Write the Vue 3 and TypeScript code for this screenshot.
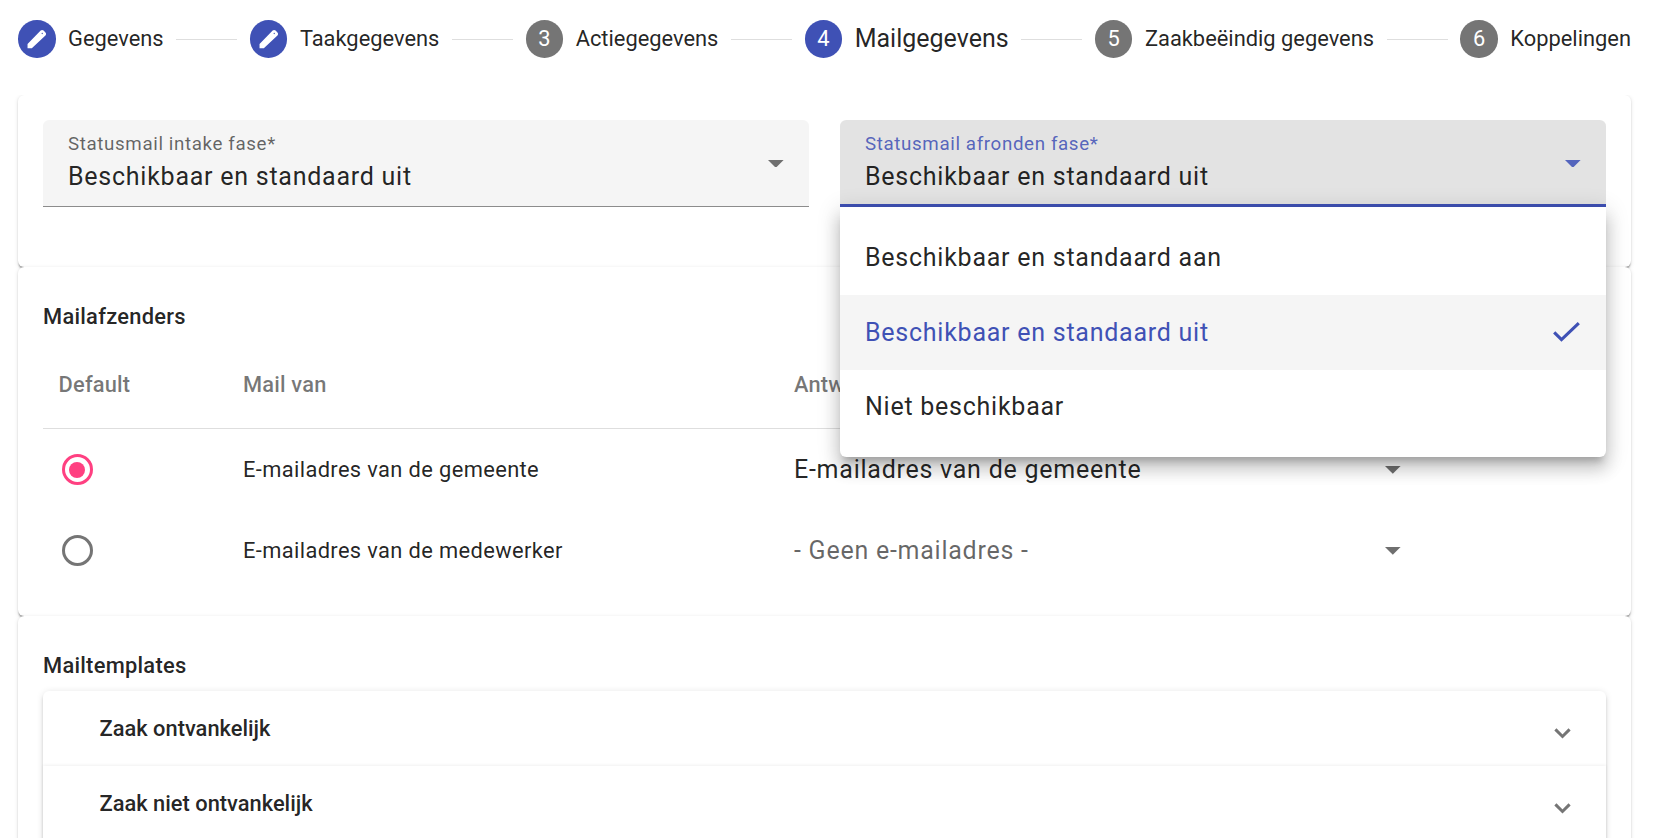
<script setup lang="ts">
import { ref } from 'vue'

interface Step {
  label: string
  state: 'edit' | 'number' | 'active'
}

interface Sender {
  from: string
  replyTo: string | null
}

const steps: Step[] = [
  { label: 'Gegevens', state: 'edit' },
  { label: 'Taakgegevens', state: 'edit' },
  { label: 'Actiegegevens', state: 'number' },
  { label: 'Mailgegevens', state: 'active' },
  { label: 'Zaakbeëindig gegevens', state: 'number' },
  { label: 'Koppelingen', state: 'number' },
]

const options = ['Beschikbaar en standaard aan', 'Beschikbaar en standaard uit', 'Niet beschikbaar']
const intake = ref(options[1])
const finish = ref(options[1])

const senders: Sender[] = [
  { from: 'E-mailadres van de gemeente', replyTo: 'E-mailadres van de gemeente' },
  { from: 'E-mailadres van de medewerker', replyTo: null },
]
const defaultSender = ref(0)

const templates = ['Zaak ontvankelijk', 'Zaak niet ontvankelijk']
</script>

<template>
  <main class="page">
    <header class="stepper">
      <template v-for="(step, i) in steps" :key="step.label">
        <span v-if="i > 0" class="step-line"></span>
        <div class="step" :class="step.state">
          <span class="step-icon">
            <svg v-if="step.state === 'edit'" viewBox="0 0 24 24">
              <path fill-rule="evenodd" d="M3.4 16.4v4.1h4.1L20.6 8.1c.8-.8.8-2 0-2.8l-1.8-1.9c-.8-.8-2-.8-2.8 0zM17.5 5.6a.6.6 0 1 0 .01 0z" />
            </svg>
            <span v-else class="step-number">{{ i + 1 }}</span>
          </span>
          <span class="step-label">{{ step.label }}</span>
        </div>
      </template>
    </header>

    <section class="card fields">
      <div class="field">
        <div class="field-text">
          <span class="field-label">Statusmail intake fase*</span>
          <span class="field-value">{{ intake }}</span>
        </div>
        <svg class="arrow" viewBox="0 0 10 5"><path d="M0 0h10L5 5z" /></svg>
      </div>
      <div class="field open">
        <div class="field-text">
          <span class="field-label">Statusmail afronden fase*</span>
          <span class="field-value">{{ finish }}</span>
        </div>
        <svg class="arrow" viewBox="0 0 10 5"><path d="M0 0h10L5 5z" /></svg>
        <ul class="panel">
          <li v-for="o in options" :key="o" class="option" :class="{ selected: o === finish }" @click="finish = o">
            <span>{{ o }}</span>
            <svg v-if="o === finish" class="check" viewBox="0 0 27 20">
              <path d="M1.2 10.4l7.3 7.3L25.8 1.2" />
            </svg>
          </li>
        </ul>
      </div>
    </section>

    <section class="card senders">
      <h2>Mailafzenders</h2>
      <div class="row head">
        <span>Default</span>
        <span>Mail van</span>
        <span>Antwoord aan</span>
      </div>
      <div v-for="(s, i) in senders" :key="s.from" class="row">
        <span class="radio-cell">
          <span class="radio" :class="{ on: defaultSender === i }" @click="defaultSender = i"></span>
        </span>
        <span>{{ s.from }}</span>
        <span class="inline-select" :class="{ empty: !s.replyTo }">
          <span>{{ s.replyTo ?? '- Geen e-mailadres -' }}</span>
          <svg class="arrow" viewBox="0 0 10 5"><path d="M0 0h10L5 5z" /></svg>
        </span>
      </div>
    </section>

    <section class="card templates">
      <h2>Mailtemplates</h2>
      <div class="accordion">
        <div v-for="t in templates" :key="t" class="accordion-row">
          <span>{{ t }}</span>
          <svg class="chevron" viewBox="0 0 17 11"><path d="M1.4 1.4l7.1 7.1 7.1-7.1" /></svg>
        </div>
      </div>
    </section>
  </main>
</template>

<style>
body {
  margin: 0;
  background: #fff;
}
</style>

<style scoped>
.page {
  box-sizing: border-box;
  height: 838px;
  overflow: hidden;
  padding: 0 22px 0 18px;
  font-family: Roboto, sans-serif;
  font-size: 21.875px;
  color: rgba(0, 0, 0, 0.87);
}
.stepper {
  position: relative;
  z-index: 1;
  box-sizing: border-box;
  display: flex;
  align-items: center;
  height: 95px;
  padding-bottom: 17px;
  background: #fff;
}
.step {
  display: flex;
  align-items: center;
  gap: 12.5px;
  white-space: nowrap;
}
.step-icon {
  display: flex;
  align-items: center;
  justify-content: center;
  width: 37.5px;
  height: 37.5px;
  border-radius: 50%;
  background: #757575;
  color: #fff;
}
.edit .step-icon,
.active .step-icon {
  background: #3f51b5;
}
.step-icon svg {
  width: 25px;
  height: 25px;
  fill: #fff;
}
.step-label,
.step-number {
  padding-bottom: 1.5px;
}
.active .step-label {
  font-size: 25px;
}
.step-line {
  flex: 1;
  height: 1px;
  margin: 0 12.5px;
  background: #dedede;
}
.card {
  box-sizing: border-box;
  padding: 25px;
  border-radius: 6.25px;
  background: #fff;
  box-shadow:
    0 3px 1.5px -1.5px rgba(0, 0, 0, 0.2),
    0 1.5px 1.5px 0 rgba(0, 0, 0, 0.14),
    0 1.5px 4.7px 0 rgba(0, 0, 0, 0.12);
}
.fields {
  display: grid;
  grid-template-columns: 1fr 1fr;
  gap: 31px;
  height: 172px;
}
.field {
  position: relative;
  box-sizing: border-box;
  display: flex;
  align-items: center;
  justify-content: space-between;
  height: 87px;
  padding: 0 25px;
  border-radius: 6.25px 6.25px 0 0;
  border-bottom: 1px solid #8c8c8c;
  background: #f5f5f5;
}
.field-text {
  display: flex;
  flex-direction: column;
  align-self: flex-start;
  padding-top: 14px;
}
.field-label {
  height: 24px;
  line-height: 20px;
  font-size: 18.75px;
  letter-spacing: 0.62px;
  color: rgba(0, 0, 0, 0.6);
}
.field-value {
  line-height: 37.5px;
  font-size: 25px;
  letter-spacing: 0.75px;
}
.arrow {
  width: 15.6px;
  height: 7.8px;
  flex: none;
  margin-top: 1px;
  fill: #6f6f6f;
}
.field.open {
  border-bottom: 3px solid #3f51b5;
  background: #e3e3e3;
}
.open .field-label {
  color: rgba(63, 81, 181, 0.87);
}
.open .arrow {
  margin-top: 3px;
  fill: #5465bd;
}
.panel {
  position: absolute;
  z-index: 2;
  top: 87px;
  left: 0;
  right: 0;
  margin: 0;
  padding: 12.5px 0;
  list-style: none;
  border-radius: 0 0 6.25px 6.25px;
  background: #fff;
  box-shadow:
    0 7.8px 7.8px -4.7px rgba(0, 0, 0, 0.2),
    0 12.5px 15.6px 1.5px rgba(0, 0, 0, 0.14),
    0 4.7px 21.9px 3px rgba(0, 0, 0, 0.12);
}
.option {
  box-sizing: border-box;
  display: flex;
  align-items: center;
  justify-content: space-between;
  height: 75px;
  padding: 0 25px;
  font-size: 25px;
  letter-spacing: 0.75px;
}
.option:last-child {
  padding-bottom: 1px;
}
.option.selected {
  background: #f5f5f5;
  color: #3f51b5;
}
.check {
  width: 27px;
  height: 20px;
  margin: 0 1px 0 0;
  fill: none;
  stroke: #3f51b5;
  stroke-width: 3.1;
}
.senders {
  height: 349px;
}
h2 {
  margin: 0;
  height: 49px;
  line-height: 49px;
  font-size: 21.875px;
  font-weight: 500;
  letter-spacing: 0.27px;
}
.row {
  display: grid;
  grid-template-columns: 184px 551px 623px;
  align-items: center;
  height: 81px;
  letter-spacing: 0.37px;
}
.row > span {
  padding-left: 16px;
}
.row > span:first-child {
  padding-left: 15.6px;
}
.head {
  height: 87px;
  border-bottom: 1px solid #dedede;
  font-weight: 500;
  letter-spacing: 0.17px;
  color: rgba(0, 0, 0, 0.54);
}
.radio-cell {
  display: flex;
}
.radio {
  box-sizing: border-box;
  display: flex;
  align-items: center;
  justify-content: center;
  width: 31px;
  height: 31px;
  margin-left: 3.4px;
  border: 3px solid #757575;
  border-radius: 50%;
}
.radio.on {
  border-color: #ff4081;
}
.radio.on::after {
  content: '';
  width: 16px;
  height: 16px;
  border-radius: 50%;
  background: #ff4081;
}
.inline-select {
  display: flex;
  align-items: center;
  justify-content: space-between;
  font-size: 25px;
  letter-spacing: 0.75px;
}
.inline-select.empty {
  color: rgba(0, 0, 0, 0.6);
}
.accordion {
  margin-top: 1px;
  border-radius: 6.25px;
  box-shadow:
    0 4.7px 1.5px -3px rgba(0, 0, 0, 0.2),
    0 3px 3px 0 rgba(0, 0, 0, 0.14),
    0 1.5px 7.8px 0 rgba(0, 0, 0, 0.12);
}
.accordion-row {
  box-sizing: border-box;
  display: flex;
  align-items: center;
  justify-content: space-between;
  height: 75px;
  padding: 0 35px 0 56.5px;
  font-weight: 500;
}
.accordion-row + .accordion-row,
.accordion::after {
  box-shadow: 0 -1px 3px rgba(0, 0, 0, 0.06);
}
.accordion::after {
  content: '';
  display: block;
  height: 75px;
}
.chevron {
  width: 17px;
  height: 11px;
  margin-top: 9px;
  fill: none;
  stroke: #757575;
  stroke-width: 3;
}
</style>
